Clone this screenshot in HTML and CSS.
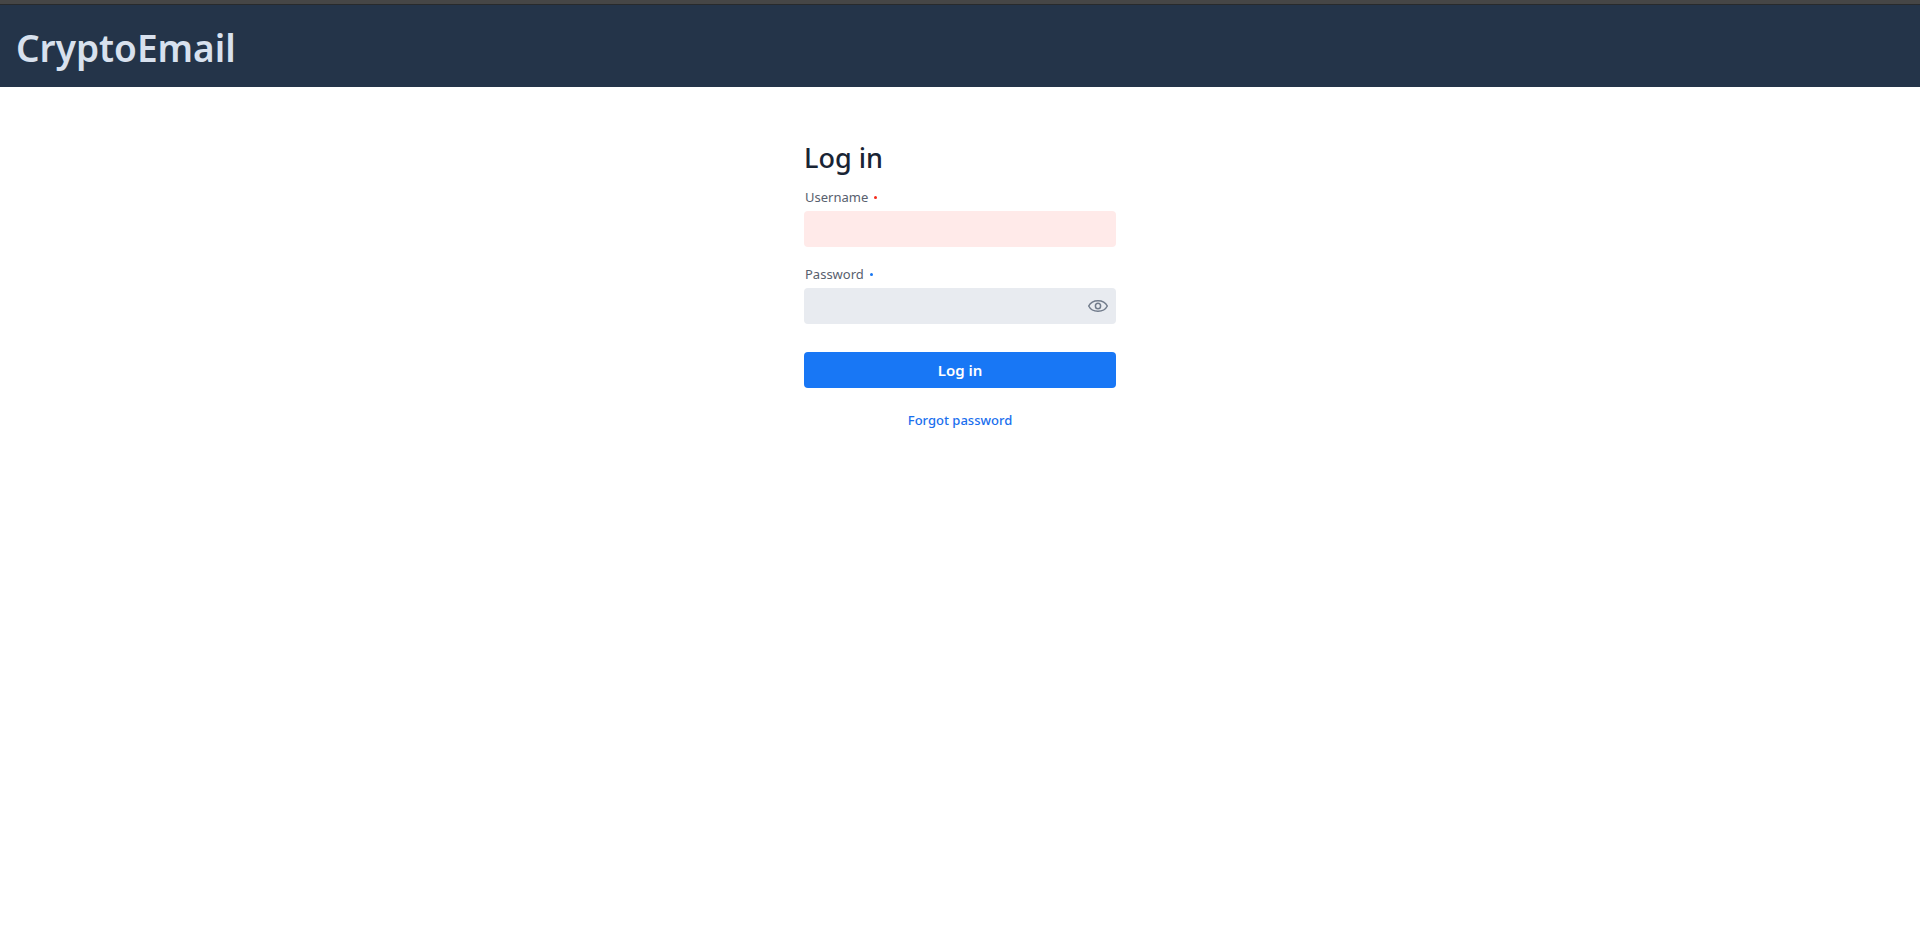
FILE: index.html
```html
<!DOCTYPE html>
<html lang="en">

<head>
    <meta charset="UTF-8">
    <title>CryptoEmail</title>
    <link rel="stylesheet" href="styles.css">
</head>

<body>
    <header class="navbar">
        <h1>CryptoEmail</h1>
    </header>

    <main class="login">
        <form class="login-form">
            <h2>Log in</h2>

            <div class="field invalid">
                <label for="username">Username <span class="dot"></span></label>
                <input type="text" id="username" name="username">
            </div>

            <div class="field">
                <label for="password">Password <span class="dot"></span></label>
                <div class="password-box">
                    <input type="password" id="password" name="password">
                    <button type="button" class="reveal" aria-label="Show password">
                        <svg width="20" height="20" viewBox="0 0 20 20" fill="none" stroke="currentColor" stroke-width="1.5">
                            <path d="M0.7 10C2.4 6.6 5.8 4.7 10 4.7S17.6 6.6 19.3 10C17.6 13.4 14.2 15.3 10 15.3S2.4 13.4 0.7 10Z" />
                            <ellipse cx="10" cy="10" rx="2.6" ry="2.8" />
                        </svg>
                    </button>
                </div>
            </div>

            <button type="submit" class="submit">Log in</button>
            <a href="#" class="forgot">Forgot password</a>
        </form>
    </main>
</body>

</html>
```

FILE: styles.css
```css
* {
    box-sizing: border-box;
}

body {
    margin: 0;
    background-color: #fff;
    font-family: "Segoe UI", "Noto Sans", sans-serif;
}

.navbar {
    padding: 18px 16px 14px;
    border-top: 4px solid #464646;
    background-color: #243449;
    box-shadow: inset 0 1px #282a2c;
}

.navbar h1 {
    margin: 0;
    color: #d8e1ee;
    font-size: 37px;
    font-weight: 600;
    line-height: 51px;
}

.login {
    display: flex;
    justify-content: center;
    padding: 51px 24px;
}

.login-form {
    display: flex;
    flex-direction: column;
    width: 312px;
}

.login-form h2 {
    margin: 0 0 9px;
    color: #192434;
    font-size: 27px;
    font-weight: 500;
    line-height: 40px;
}

.field {
    margin-bottom: 17px;
}

.field label {
    display: flex;
    align-items: center;
    gap: 6px;
    padding: 0 1px 4px;
    color: #58606e;
    font-size: 13px;
    font-weight: 400;
    line-height: 20px;
}

.dot {
    width: 3px;
    height: 3px;
    border-radius: 50%;
    background-color: #1877f2;
}

.invalid .dot {
    background-color: #f52a1a;
}

.field input {
    display: block;
    width: 100%;
    height: 36px;
    padding: 0 8px;
    border: 0;
    border-radius: 4px;
    background-color: #e8ebf0;
    font: inherit;
}

.field.invalid input {
    background-color: #ffeae9;
}

.password-box {
    position: relative;
}

.field .password-box input {
    padding-right: 36px;
}

.reveal {
    position: absolute;
    top: 0;
    right: 0;
    display: flex;
    align-items: center;
    justify-content: center;
    width: 36px;
    height: 36px;
    padding: 0;
    border: 0;
    background: none;
    color: #717b8b;
    cursor: pointer;
}

.submit {
    height: 36px;
    margin: 11px 0 20px;
    border: 0;
    border-radius: 4px;
    background-color: #1877f5;
    color: #fff;
    font: inherit;
    font-size: 15px;
    font-weight: 600;
    cursor: pointer;
}

.forgot {
    align-self: center;
    color: #1a6fee;
    font-size: 13px;
    font-weight: 500;
    line-height: 24px;
    text-decoration: none;
}
```
